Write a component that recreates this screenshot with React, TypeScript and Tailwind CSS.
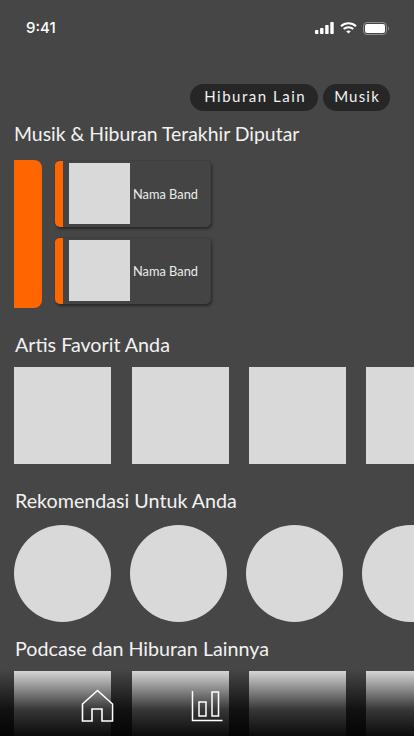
import React from 'react';

const font = "font-['Lato',sans-serif]";

function StatusBar() {
  return (
    <div className="flex items-center justify-between h-[28px] mt-[14px] pl-[26px] pr-[25px]">
      <span className="pt-[1px] font-['Inter',sans-serif] font-medium text-[15px] text-white">9:41</span>
      <div className="flex items-center gap-[6px]">
        <svg width="19" height="12" viewBox="0 0 19 12" fill="white">
          <rect x="0" y="8" width="3.4" height="4" rx="0.7" />
          <rect x="5.1" y="6" width="3.4" height="6" rx="0.7" />
          <rect x="10.2" y="3" width="3.4" height="9" rx="0.7" />
          <rect x="15.3" y="0" width="3.4" height="12" rx="0.7" />
        </svg>
        <svg width="17" height="12" viewBox="0 0 17 12" fill="none" stroke="white" strokeWidth="2">
          <path d="M1 4.2C5.2 0.2 11.8 0.2 16 4.2" />
          <path d="M3.7 7C6.4 4.5 10.6 4.5 13.3 7" />
          <path d="M8.5 11.6L6.2 9.3C7.5 8.2 9.5 8.2 10.8 9.3Z" fill="white" stroke="none" />
        </svg>
        <svg width="26" height="13" viewBox="0 0 26 13" fill="none">
          <rect x="0.5" y="0.5" width="23" height="12" rx="3.5" stroke="#8c8c8c" />
          <rect x="2" y="2" width="20" height="9" rx="2" fill="white" />
          <path d="M25 4.5C25.7 4.8 26 5.6 26 6.5C26 7.4 25.7 8.2 25 8.5Z" fill="#8c8c8c" />
        </svg>
      </div>
    </div>
  );
}

function BandCard() {
  return (
    <div className="flex w-[156px] h-[67px] rounded-[5px] overflow-hidden border-t border-r border-[#3f3f3f] bg-[#444444] shadow-[1px_2px_3px_rgba(0,0,0,0.45)]">
      <div className="w-[8px] bg-[#ff6600]" />
      <div className="w-[61px] h-[61px] ml-[6px] mt-[2px] bg-[#d9d9d9]" />
      <span className="ml-[3px] mt-[2px] self-center text-[12.8px] text-[#ececec] whitespace-nowrap">Nama Band</span>
    </div>
  );
}

function Heading({ children }: { children: React.ReactNode }) {
  return <h2 className="pl-[15px] text-[19.7px] leading-[26px] text-[#f2f2f2] whitespace-nowrap">{children}</h2>;
}

export default function App() {
  return (
    <div className={`relative w-[414px] h-[736px] overflow-hidden bg-[#464646] ${font}`}>
      <StatusBar />

      <div className="flex justify-end gap-[5px] mt-[42px] pr-[24px]">
        <span className="flex items-center h-[27px] pl-[14px] pr-[12px] pb-[2px] rounded-full bg-[#262626] text-[15px] tracking-[1.5px] text-[#f2f2f2]">Hiburan Lain</span>
        <span className="flex items-center h-[27px] pl-[11px] pr-[10px] pb-[2px] rounded-full bg-[#262626] text-[15px] tracking-[1.2px] text-[#f2f2f2]">Musik</span>
      </div>

      <h2 className="pl-[14px] mt-[10px] text-[19.4px] leading-[26px] text-[#f2f2f2] whitespace-nowrap">Musik &amp; Hiburan Terakhir Diputar</h2>

      <div className="flex gap-[13px] pl-[14px] mt-[13px]">
        <div className="w-[28px] h-[148px] bg-[#ff6600] rounded-r-[8px]" />
        <div className="flex flex-col gap-[10px]">
          <BandCard />
          <BandCard />
        </div>
      </div>

      <div className="mt-[24px]"><Heading>Artis Favorit Anda</Heading></div>
      <div className="flex gap-[20px] pl-[14px] mt-[9px]">
        <div className="shrink-0 w-[97px] h-[97px] bg-[#d9d9d9]" />
        <div className="shrink-0 w-[97px] h-[97px] ml-[1px] bg-[#d9d9d9]" />
        <div className="shrink-0 w-[97px] h-[97px] bg-[#d9d9d9]" />
        <div className="shrink-0 w-[97px] h-[97px] bg-[#d9d9d9]" />
      </div>

      <div className="mt-[24px]"><Heading>Rekomendasi Untuk Anda</Heading></div>
      <div className="flex gap-[19px] pl-[14px] mt-[11px]">
        <div className="shrink-0 w-[97px] h-[97px] rounded-full bg-[#d9d9d9]" />
        <div className="shrink-0 w-[97px] h-[97px] rounded-full bg-[#d9d9d9]" />
        <div className="shrink-0 w-[97px] h-[97px] rounded-full bg-[#d9d9d9]" />
        <div className="shrink-0 w-[97px] h-[97px] rounded-full bg-[#d9d9d9]" />
      </div>

      <div className="mt-[14px]"><Heading>Podcase dan Hiburan Lainnya</Heading></div>
      <div className="flex gap-[20px] pl-[14px] mt-[9px]">
        <div className="shrink-0 w-[97px] h-[97px] bg-[#d9d9d9]" />
        <div className="shrink-0 w-[97px] h-[97px] ml-[1px] bg-[#d9d9d9]" />
        <div className="shrink-0 w-[97px] h-[97px] bg-[#d9d9d9]" />
        <div className="shrink-0 w-[97px] h-[97px] bg-[#d9d9d9]" />
      </div>

      {/* bottom nav fades over the last row */}
      <div className="absolute left-0 right-0 bottom-0 h-[66px] bg-gradient-to-b from-black/0 via-black/75 via-60% to-black/95">
        <svg className="absolute left-[81px] top-[19px]" width="33" height="33" viewBox="0 0 33 33" fill="none" stroke="white" strokeWidth="1.6">
          <path d="M1.5 15L16.5 1.5L31.5 15V32H21V20H11V32H1.5V15Z" />
        </svg>
        <svg className="absolute left-[191px] top-[19px]" width="32" height="33" viewBox="0 0 32 33" fill="none" stroke="white" strokeWidth="1.5">
          <path d="M1.5 2V31.5H31.5" />
          <rect x="8" y="13" width="7" height="14" />
          <rect x="21" y="3" width="6.5" height="24" />
        </svg>
      </div>
    </div>
  );
}
